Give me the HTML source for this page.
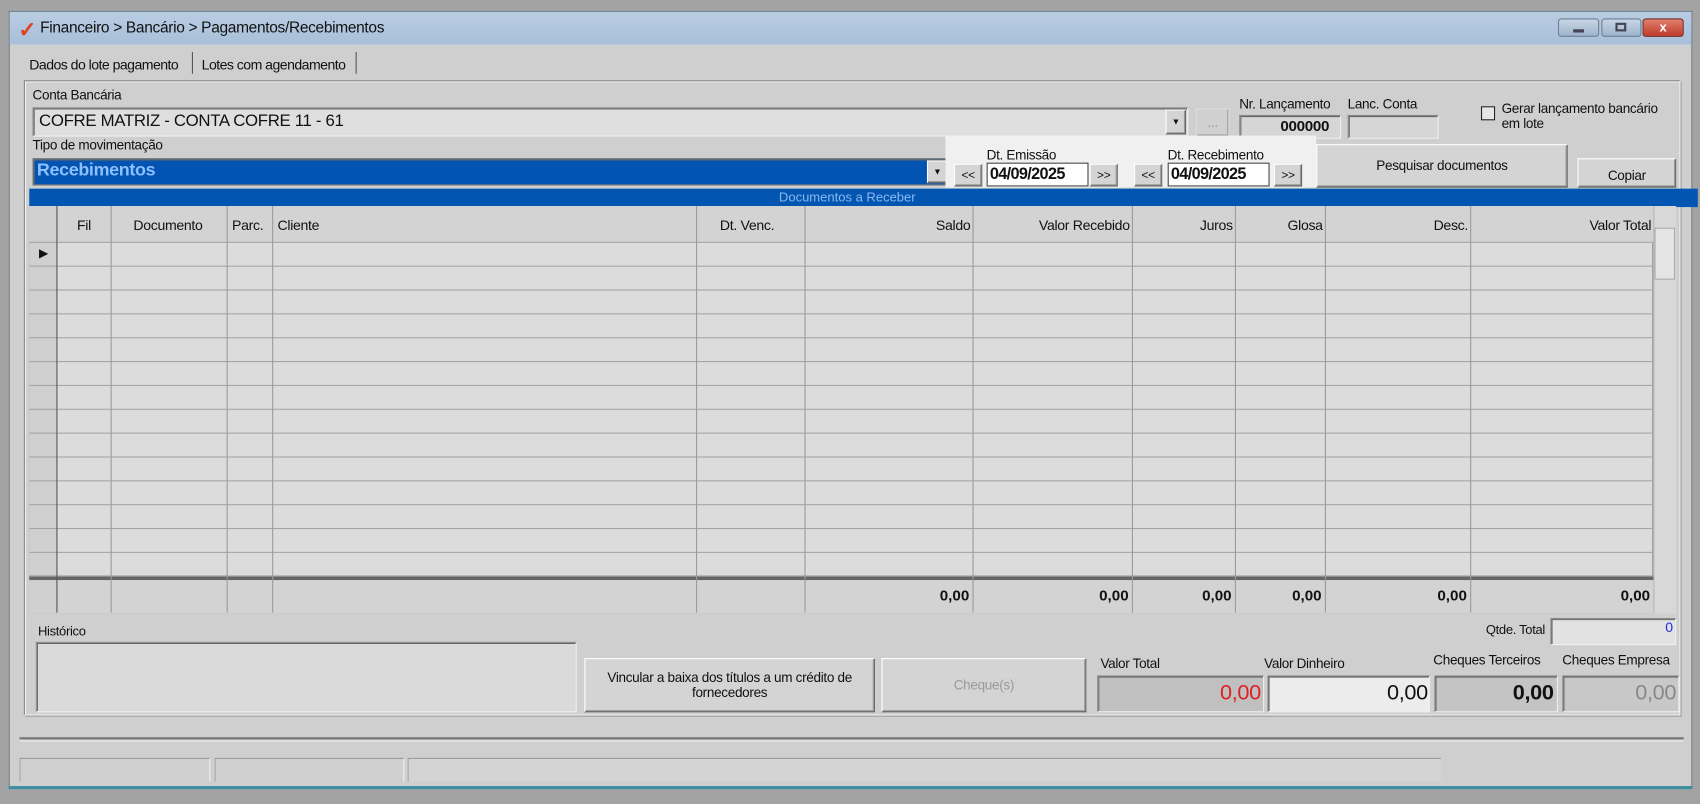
<!DOCTYPE html>
<html><head><meta charset="utf-8">
<style>
*{box-sizing:border-box;margin:0;padding:0}
html,body{width:1700px;height:804px;overflow:hidden;background:#a3a3a3;font-family:"Liberation Sans",Arial,sans-serif;color:#111}
#w{position:absolute;left:0;top:0;width:1568px;height:742px;transform:scale(1.08418);transform-origin:0 0}
.a{position:absolute}
.t{position:absolute;font-size:12.5px;white-space:nowrap;letter-spacing:-0.3px}
.in{position:absolute;border:1px solid #888;border-right-color:#eee;border-bottom-color:#eee;box-shadow:inset 1px 1px 0 #666}
.bt{position:absolute;background:#d4d4d4;border:1px solid #fff;border-right-color:#666;border-bottom-color:#555;box-shadow:inset -1px -1px 0 #999;font-size:12.5px;display:flex;align-items:center;justify-content:center;text-align:center;letter-spacing:-0.3px}
.vl{position:absolute;top:190px;width:1px;height:375px;background:#9a9a9a}
.hl{position:absolute;left:27px;width:1498px;height:1px;background:#a5a5a5}
.h{position:absolute;top:200px;font-size:13px;letter-spacing:-0.3px}
.f{position:absolute;top:541px;font-size:14px;font-weight:bold}
</style></head><body><div id="w">
<div class="a" style="left:8px;top:10px;width:1553px;height:718px;background:#cfcfcf;border:1px solid #6a7a8a;border-bottom:3px solid #3f8ea0"></div>
<div class="a" style="left:9px;top:11px;width:1551px;height:30px;background:linear-gradient(#b9cde3,#a8bfd9)"></div>
<div class="t" style="left:17px;top:15px;font-size:20px;color:#e0401a;font-weight:bold">✓</div>
<div class="t" style="left:37px;top:18px;font-size:14.3px">Financeiro &gt; Bancário &gt; Pagamentos/Recebimentos</div>
<div class="a" style="left:1437px;top:17px;width:38px;height:17px;background:linear-gradient(#c8d6e6,#9db3cc);border:1px solid #6d7f95;border-radius:3px"></div>
<div class="a" style="left:1451px;top:27px;width:10px;height:3px;background:#445"></div>
<div class="a" style="left:1477px;top:17px;width:37px;height:17px;background:linear-gradient(#c8d6e6,#9db3cc);border:1px solid #6d7f95;border-radius:3px"></div>
<div class="a" style="left:1490px;top:21px;width:10px;height:8px;border:2px solid #445"></div>
<div class="a" style="left:1515px;top:17px;width:38px;height:17px;background:linear-gradient(#e08070,#c03a28);border:1px solid #7a2a20;border-radius:3px;color:#fff;font-size:12px;font-weight:bold;text-align:center;line-height:15px">x</div>
<div class="t" style="left:27px;top:52px;font-size:13px;letter-spacing:-0.5px">Dados do lote pagamento</div>
<div class="a" style="left:177px;top:48px;width:1px;height:20px;background:#555"></div>
<div class="t" style="left:186px;top:52px;font-size:13px;letter-spacing:-0.5px">Lotes com agendamento</div>
<div class="a" style="left:328px;top:48px;width:1px;height:20px;background:#555"></div>
<div class="a" style="left:22px;top:74px;width:1528px;height:586px;border:1px solid #888;border-right-color:#f0f0f0;border-bottom-color:#f0f0f0;box-shadow:1px 1px 0 #999,inset 1px 1px 0 #f2f2f2"></div>
<div class="t" style="left:30px;top:81px">Conta Bancária</div>
<div class="in" style="left:30px;top:99px;width:1066px;height:27px;background:#dfdfdf"></div>
<div class="t" style="left:36px;top:103px;font-size:15.5px">COFRE MATRIZ - CONTA COFRE 11 - 61</div>
<div class="bt" style="left:1075px;top:101px;width:19px;height:23px;font-size:8px">▼</div>
<div class="bt" style="left:1103px;top:100px;width:31px;height:26px;color:#999;background:#d0d0d0;border-color:#ddd">...</div>
<div class="t" style="left:1143px;top:89px">Nr. Lançamento</div>
<div class="in" style="left:1143px;top:106px;width:94px;height:22px;background:#d6d6d6"></div>
<div class="t" style="left:1181px;top:108px;font-weight:bold;font-size:14px">000000</div>
<div class="t" style="left:1243px;top:89px">Lanc. Conta</div>
<div class="in" style="left:1243px;top:106px;width:84px;height:22px;background:#d6d6d6"></div>
<div class="a" style="left:1366px;top:98px;width:13px;height:13px;border:1.5px solid #222;background:#e6e6e6"></div>
<div class="t" style="left:1385px;top:93px">Gerar lançamento bancário</div>
<div class="t" style="left:1385px;top:107px">em lote</div>
<div class="t" style="left:30px;top:127px">Tipo de movimentação</div>
<div class="in" style="left:30px;top:146px;width:846px;height:25px;background:#0353b3;border-color:#777"></div>
<div class="t" style="left:34px;top:148px;font-size:16.5px;font-weight:bold;color:#8cc0ff">Recebimentos</div>
<div class="bt" style="left:855px;top:148px;width:19px;height:21px;font-size:8px">▼</div>
<div class="a" style="left:872px;top:125px;width:342px;height:48px;background:#f0f0f0"></div>
<div class="t" style="left:910px;top:136px">Dt. Emissão</div>
<div class="bt" style="left:880px;top:151px;width:26px;height:21px;font-size:11px">&lt;&lt;</div>
<div class="a" style="left:910px;top:150px;width:94px;height:22px;background:#fff;border:1px solid #444"></div>
<div class="t" style="left:913px;top:152px;font-size:15px;font-weight:bold;letter-spacing:-0.6px">04/09/2025</div>
<div class="bt" style="left:1005px;top:151px;width:26px;height:21px;font-size:11px">&gt;&gt;</div>
<div class="t" style="left:1077px;top:136px">Dt. Recebimento</div>
<div class="bt" style="left:1046px;top:151px;width:26px;height:21px;font-size:11px">&lt;&lt;</div>
<div class="a" style="left:1077px;top:150px;width:94px;height:22px;background:#fff;border:1px solid #444"></div>
<div class="t" style="left:1080px;top:152px;font-size:15px;font-weight:bold;letter-spacing:-0.6px">04/09/2025</div>
<div class="bt" style="left:1175px;top:151px;width:26px;height:21px;font-size:11px">&gt;&gt;</div>
<div class="bt" style="left:1214px;top:133px;width:232px;height:40px">Pesquisar documentos</div>
<div class="bt" style="left:1455px;top:146px;width:91px;height:27px;padding-top:4px">Copiar</div>
<div class="a" style="left:27px;top:174px;width:1539px;height:17px;background:#0255b0;color:#8ab8ef;font-size:12px;text-align:center;line-height:17px;padding-right:30px">Documentos a Receber</div>
<div class="a" style="left:27px;top:190px;width:1498px;height:376px;background:#dcdcdc;border:1px solid #888"></div>
<div class="a" style="left:27px;top:190px;width:1498px;height:33px;background:#d3d3d3"></div>
<div class="a" style="left:27px;top:535px;width:1498px;height:31px;background:#d3d3d3"></div>
<div class="a" style="left:27px;top:190px;width:25px;height:376px;background:#d0d0d0"></div>
<div class="a" style="left:1525px;top:190px;width:21px;height:376px;background:#d8d8d8;border-left:1px solid #bbb"></div>
<div class="a" style="left:1526px;top:210px;width:19px;height:48px;background:#e4e4e4;border:1px solid #aaa"></div>
<div class="hl" style="top:223px"></div><div class="hl" style="top:245px"></div><div class="hl" style="top:267px"></div><div class="hl" style="top:289px"></div><div class="hl" style="top:311px"></div><div class="hl" style="top:333px"></div><div class="hl" style="top:355px"></div><div class="hl" style="top:377px"></div><div class="hl" style="top:399px"></div><div class="hl" style="top:421px"></div><div class="hl" style="top:443px"></div><div class="hl" style="top:465px"></div><div class="hl" style="top:487px"></div><div class="hl" style="top:509px"></div>
<div class="a" style="left:27px;top:531px;width:1498px;height:4px;background:#666;border-top:1px solid #999"></div>
<div class="vl" style="left:52px;background:#555"></div><div class="vl" style="left:102px"></div><div class="vl" style="left:209px"></div><div class="vl" style="left:251px"></div><div class="vl" style="left:642px"></div><div class="vl" style="left:742px"></div><div class="vl" style="left:897px"></div><div class="vl" style="left:1044px"></div><div class="vl" style="left:1139px"></div><div class="vl" style="left:1222px"></div><div class="vl" style="left:1356px"></div>
<div class="t" style="left:36px;top:227px;font-size:11px">▶</div>
<div class="h" style="left:71px">Fil</div>
<div class="h" style="left:123px">Documento</div>
<div class="h" style="left:214px">Parc.</div>
<div class="h" style="left:256px">Cliente</div>
<div class="h" style="left:664px">Dt. Venc.</div>
<div class="h" style="right:673px">Saldo</div>
<div class="h" style="right:526px">Valor Recebido</div>
<div class="h" style="right:431px">Juros</div>
<div class="h" style="right:348px">Glosa</div>
<div class="h" style="right:214px">Desc.</div>
<div class="h" style="right:45px">Valor Total</div>
<div class="f" style="right:674px">0,00</div><div class="f" style="right:527px">0,00</div><div class="f" style="right:432px">0,00</div><div class="f" style="right:349px">0,00</div><div class="f" style="right:215px">0,00</div><div class="f" style="right:46px">0,00</div>
<div class="t" style="left:35px;top:575px;font-size:12px">Histórico</div>
<div class="in" style="left:33px;top:592px;width:499px;height:65px;background:#dadada"></div>
<div class="t" style="right:143px;top:574px;font-size:12px">Qtde. Total</div>
<div class="in" style="left:1430px;top:570px;width:116px;height:25px;background:#e2e2e2"></div>
<div class="t" style="left:1536px;top:571px;color:#2030e0;font-size:13px">0</div>
<div class="bt" style="left:539px;top:607px;width:268px;height:50px;font-size:12.5px">Vincular a baixa dos títulos a um crédito de<br>fornecedores</div>
<div class="bt" style="left:813px;top:607px;width:189px;height:50px;color:#9a9a9a">Cheque(s)</div>
<div class="t" style="left:1015px;top:605px">Valor Total</div>
<div class="t" style="left:1166px;top:605px">Valor Dinheiro</div>
<div class="t" style="left:1322px;top:602px">Cheques Terceiros</div>
<div class="t" style="left:1441px;top:602px">Cheques Empresa</div>
<div class="in" style="left:1012px;top:623px;width:154px;height:34px;background:#c0c0c0"></div>
<div class="t" style="right:405px;top:628px;font-size:20px;color:#e02020">0,00</div>
<div class="in" style="left:1169px;top:623px;width:150px;height:34px;background:#ececec"></div>
<div class="t" style="right:251px;top:628px;font-size:20px">0,00</div>
<div class="in" style="left:1323px;top:623px;width:114px;height:34px;background:#c4c4c4"></div>
<div class="t" style="right:135px;top:628px;font-size:20px;font-weight:bold">0,00</div>
<div class="in" style="left:1441px;top:623px;width:108px;height:34px;background:#c8c8c8"></div>
<div class="t" style="right:22px;top:628px;font-size:20px;color:#888">0,00</div>
<div class="a" style="left:18px;top:680px;width:1535px;height:4px;border-top:2px solid #777;border-bottom:1px solid #eee"></div>
<div class="a" style="left:18px;top:699px;width:176px;height:22px;border-top:1px solid #999;border-left:1px solid #aaa;border-right:1px solid #f2f2f2"></div>
<div class="a" style="left:198px;top:699px;width:175px;height:22px;border-top:1px solid #999;border-left:1px solid #aaa;border-right:1px solid #f2f2f2"></div>
<div class="a" style="left:376px;top:699px;width:953px;height:22px;border-top:1px solid #999;border-left:1px solid #aaa;background:#d4d4d4"></div>
</div></body></html>
